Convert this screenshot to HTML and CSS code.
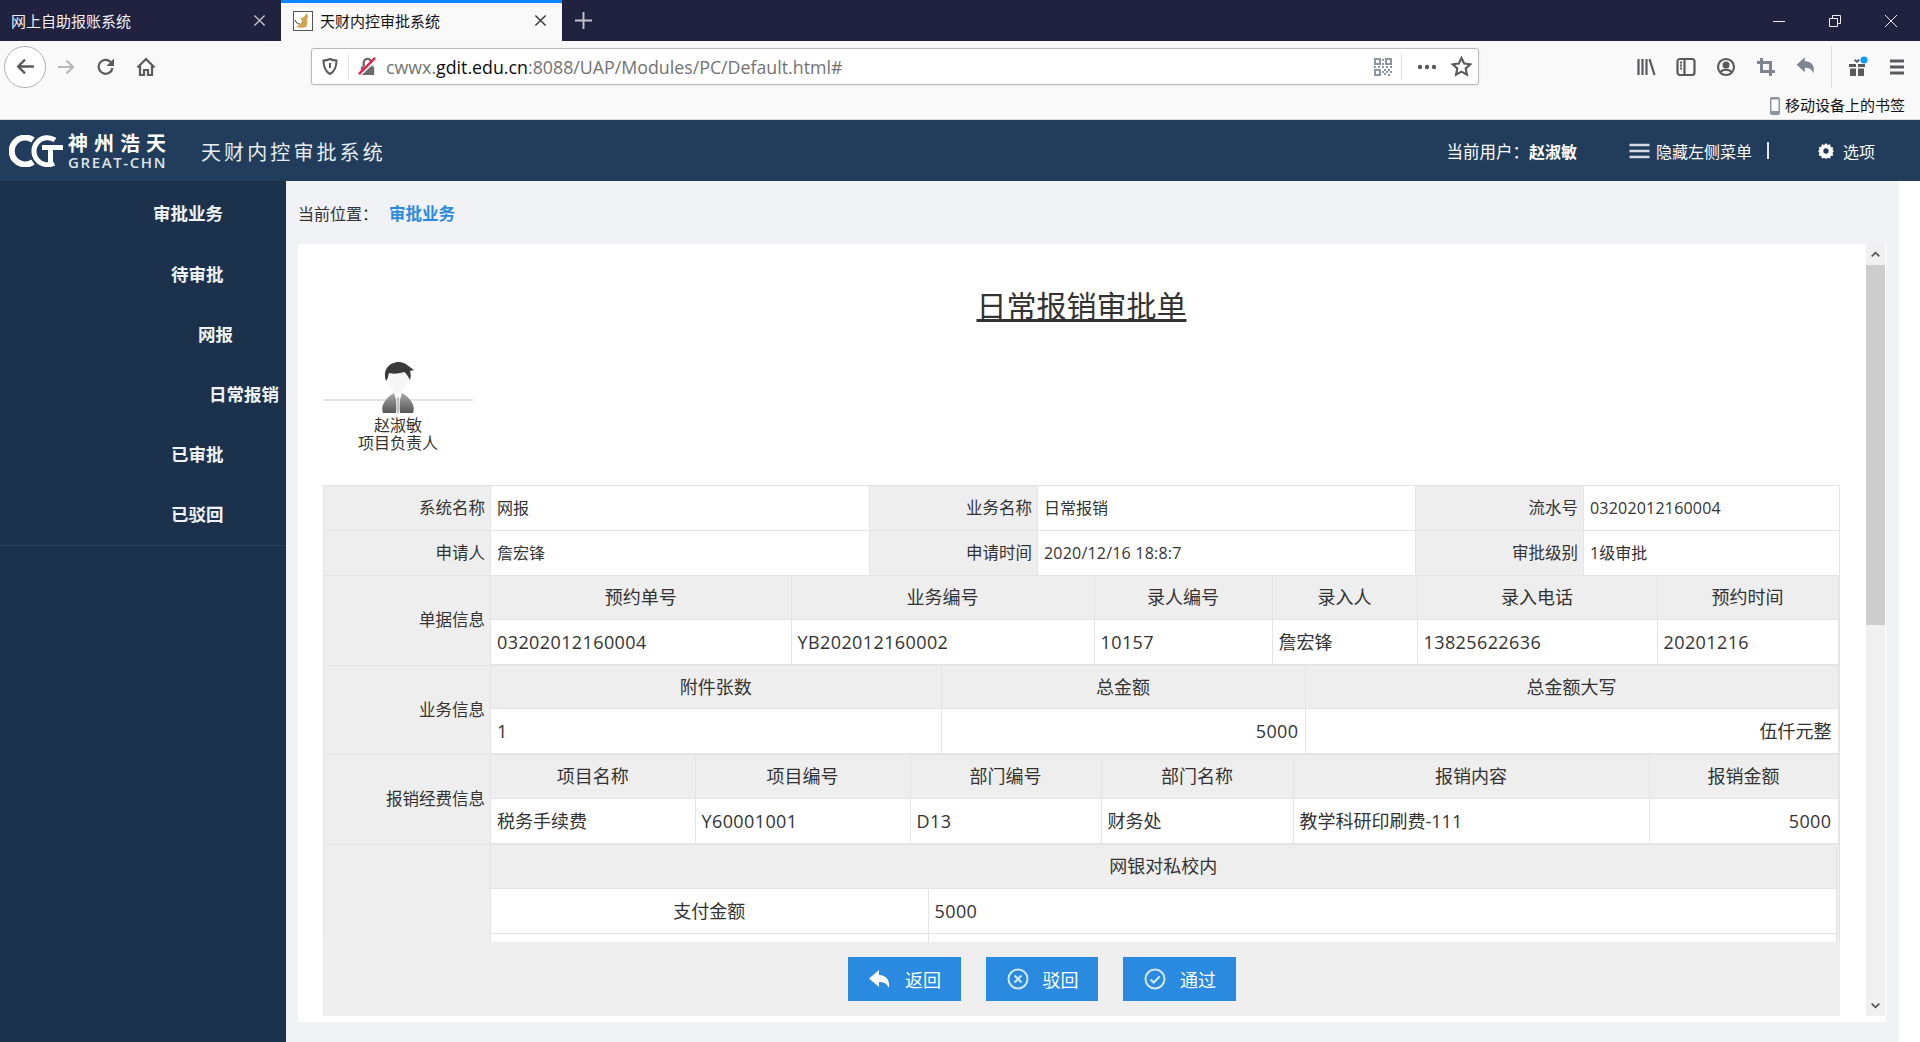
FILE: index.html
```html
<!DOCTYPE html>
<html lang="zh-CN">
<head>
  <meta charset="UTF-8" />
  <title>天财内控审批系统</title>
  <link rel="stylesheet" href="styles.css">
</head>
<body>
  <!-- Browser tabs -->
  <div class="tabbar">
    <div class="tab">
      <span class="tab-title">网上自助报账系统</span>
      <svg class="tab-close" viewBox="0 0 14 14"><path d="M1.5 1.5l11 11M12.5 1.5l-11 11"/></svg>
    </div>
    <div class="tab tab-active">
      <svg class="favicon" viewBox="0 0 20 20">
        <rect x="0.5" y="0.5" width="19" height="19" fill="#fff" stroke="#555"/>
        <path d="M3 16c3-1 5-3 6-6l-2-4 2 1 3-2 1-3 2 3-1 4c1 3 0 5-1 7-3 1-7 1-10 0z" fill="#d3a24f"/>
        <path d="M2 9c1 3 3 4 5 4" fill="none" stroke="#333"/>
      </svg>
      <span class="tab-title">天财内控审批系统</span>
      <svg class="tab-close" viewBox="0 0 14 14"><path d="M1.5 1.5l11 11M12.5 1.5l-11 11"/></svg>
    </div>
    <svg class="tab-new" viewBox="0 0 18 18"><path d="M9 0v18M0 9h18"/></svg>
    <div class="window-btns">
      <svg viewBox="0 0 14 14"><path d="M1 7.5h12"/></svg>
      <svg viewBox="0 0 14 14"><path d="M1.5 4.5h8v8h-8zM4.5 4.5v-3h8v8h-3"/></svg>
      <svg viewBox="0 0 14 14"><path d="M1 1l12 12M13 1L1 13"/></svg>
    </div>
  </div>

  <!-- Browser toolbar -->
  <div class="toolbar">
    <div class="toolbar-row">
      <span class="tool tool-back">
        <svg viewBox="0 0 20 20"><path d="M18 10H3M9.5 3.5L3 10l6.5 6.5"/></svg>
      </span>
      <span class="tool tool-disabled">
        <svg viewBox="0 0 20 20"><path d="M2 10h15M10.5 3.5L17 10l-6.5 6.5"/></svg>
      </span>
      <span class="tool">
        <svg viewBox="0 0 20 20"><path d="M16.5 11a7 7 0 1 1-2-6.2L17 7"/><path class="solid" d="M18 1.5V9h-7.5z"/></svg>
      </span>
      <span class="tool">
        <svg viewBox="0 0 20 20"><path d="M1.5 10.500L10 2l8.500 8.500M4 9v9h4v-5h4v5h4V9"/></svg>
      </span>

      <div class="urlbar">
        <svg class="url-shield" viewBox="0 0 16 18"><path d="M8 1.500c2 1 4 1.500 6.500 1.500 0 6-1 10.500-6.500 13.500C2.500 13.500 1.500 9 1.500 3 4 3 6 2.500 8 1.500z"/><path d="M8 5.500v5"/></svg>
        <span class="url-sep"></span>
        <svg class="url-lock" viewBox="0 0 20 20"><path d="M3 10h14v9H3z" fill="#6b6b6b"/><path d="M6 10V6a4 4 0 0 1 8 0v4" fill="none" stroke="#6b6b6b" stroke-width="2.500"/><path d="M1 19L19 2" stroke="#fff" stroke-width="4"/><path d="M1 18L18 1" stroke="#ed1c45" stroke-width="2.500"/></svg>
        <span class="url-text">cwwx.<b>gdit.edu.cn</b>:8088/UAP/Modules/PC/Default.html#</span>
        <svg class="url-qr" viewBox="0 0 18 18">
          <path d="M0 0h7v7H0zM11 0h7v7h-7zM0 11h7v7H0z"/>
          <path class="qr-dots" d="M8 1h2v2H8zM8 5h2v2H8zM0 8h2v2H0zM4 8h2v2H4zM8 8h2v2H8zM12 8h2v2h-2zM16 8h2v2h-2zM10 11h2v2h-2zM14 11h2v2h-2zM12 13h2v2h-2zM16 13h2v2h-2zM10 15h2v2h-2zM14 16h2v2h-2zM8 13h2v2H8z"/>
          <path class="qr-holes" d="M2 2h3v3H2zM13 2h3v3h-3zM2 13h3v3H2z"/>
        </svg>
        <span class="url-sep url-sep-right"></span>
        <svg class="url-dots" viewBox="0 0 20 6"><circle cx="3" cy="3" r="2.200"/><circle cx="10" cy="3" r="2.200"/><circle cx="17" cy="3" r="2.200"/></svg>
        <svg class="url-star" viewBox="0 0 20 20"><path d="M10 1.800l2.500 5.400 5.900.7-4.400 4 1.200 5.900L10 14.900 4.800 17.800 6 11.900l-4.400-4 5.900-.7z"/></svg>
      </div>

      <div class="tools-right">
        <span class="tool">
          <svg viewBox="0 0 20 20"><path d="M2.500 2v16M6.500 2v16M10.500 2v16M13.500 2l5 16"/></svg>
        </span>
        <span class="tool">
          <svg viewBox="0 0 20 20"><rect x="1.500" y="2" width="17" height="16" rx="2.500"/><path d="M8.500 2v16M4 5.500h2M4 8.500h2M4 11.500h2"/></svg>
        </span>
        <span class="tool">
          <svg viewBox="0 0 20 20"><circle cx="10" cy="10" r="8"/><circle class="solid" cx="10" cy="8" r="3.500"/><path d="M4.500 15c2-3 9-3 11 0"/></svg>
        </span>
        <span class="tool tool-soft">
          <svg viewBox="0 0 20 20"><path class="thick" d="M5.500 1v13.500H19M1 5.500h13.500V19"/></svg>
        </span>
        <span class="tool tool-soft tool-undo">
          <svg viewBox="0 0 20 20"><path class="solid" d="M8.500 2L1.500 8.500l7 6.500v-4c3.500 0 6 .8 7.500 5 1.500-6-1-10.500-7.500-10.500z"/></svg>
        </span>
        <span class="tool-sep"></span>
        <span class="tool tool-gift">
          <svg viewBox="0 0 22 22">
            <path class="solid" d="M3 8h7v3H3zM12 8h7v3h-7zM4 12.500h6V20H4zM12 12.500h6V20h-6zM11 7L8 4.500 9.500 3 11 4.500 12.500 3 14 4.500z"/>
            <circle class="gift-dot" cx="18" cy="4" r="3.500"/>
          </svg>
        </span>
        <span class="tool">
          <svg viewBox="0 0 20 20"><path class="thick" d="M3 4h14M3 10h14M3 16h14"/></svg>
        </span>
      </div>
    </div>
    <div class="bookmarks">
      <svg class="phone-icon" viewBox="0 0 10 18"><rect x="0" y="0" width="10" height="18" rx="2" fill="#8a93a0"/><rect x="1.500" y="2.500" width="7" height="11.500" fill="#fff"/></svg>
      <span>移动设备上的书签</span>
    </div>
  </div>

  <!-- App header -->
  <header class="app-header">
    <div class="logo">
      <svg class="logo-mark" viewBox="0 0 54 32">
        <path d="M24 5A13.500 13.500 0 1 0 24 27" fill="none" stroke="#fff" stroke-width="6"/>
        <path d="M46 5A13.500 13.500 0 1 0 45 28" fill="none" stroke="#fff" stroke-width="5"/>
        <path d="M33 10h21v5H44v16h-5V15h-6z" fill="#fff"/>
      </svg>
      <div class="logo-text">
        <span class="logo-cn">神州浩天</span>
        <span class="logo-en">GREAT-CHN</span>
      </div>
    </div>
    <div class="app-title">天财内控审批系统</div>
    <div class="header-right">
      <span class="user-label">当前用户：</span>
      <b class="user-name">赵淑敏</b>
      <svg class="menu-icon" viewBox="0 0 20 16"><path d="M0 2h20M0 8h20M0 14h20"/></svg>
      <span class="hide-menu">隐藏左侧菜单</span>
      <span class="header-sep"></span>
      <svg class="gear-icon" viewBox="0 0 16 16"><path d="M8 0l1.700 2.100 2.500-.8.500 2.600 2.600.6-.8 2.500L16 8l-1.500 1.900.8 2.500-2.600.6-.5 2.600-2.500-.8L8 16l-1.700-1.200-2.500.8-.5-2.600-2.600-.6.8-2.500L0 8l1.500-1.100-.8-2.500 2.600-.6.500-2.500 2.500.8z"/><circle cx="8" cy="8" r="2.700"/></svg>
      <span class="options">选项</span>
    </div>
  </header>

  <div class="layout">
    <!-- Left menu -->
    <aside class="sidebar">
      <ul class="menu">
        <li class="menu-item level-0">审批业务</li>
        <li class="menu-item level-1">待审批</li>
        <li class="menu-item level-2">网报</li>
        <li class="menu-item level-3">日常报销</li>
        <li class="menu-item level-1">已审批</li>
        <li class="menu-item level-1">已驳回</li>
      </ul>
    </aside>

    <main class="main">
      <div class="crumb">
        <span class="crumb-label">当前位置：</span>
        <b class="crumb-link">审批业务</b>
      </div>

      <div class="panel">
        <div class="panel-body">
          <h1 class="form-title">日常报销审批单</h1>

          <div class="approver">
            <div class="avatar">
              <svg viewBox="0 0 60 60">
                <defs>
                  <linearGradient id="bodyGrad" x1="0" y1="0" x2="0" y2="1">
                    <stop offset="0" stop-color="#a8a8a8"/>
                    <stop offset="1" stop-color="#565656"/>
                  </linearGradient>
                </defs>
                <path d="M30 14c7 0 10 5 10 10s-5 14-10 14-10-8-10-14 3-10 10-10z" fill="#f6f6f6"/>
                <path d="M18 26C14 13 23 7 31 7c6 0 9 4 15 8l-4 1c1 3 1 6 0 9-2-4-4-7-6-8-6 2-12 2-15 1-1 3-1 6-3 8z" fill="#3a3a3a"/>
                <path d="M15 58c-3-8 3-15 11-20l2 7v13z" fill="url(#bodyGrad)"/>
                <path d="M45 58c3-8-3-15-11-20l-2 7v13z" fill="url(#bodyGrad)"/>
                <path d="M29 42h2l1 12-2 6-2-6z" fill="#c4c4c4"/>
              </svg>
            </div>
            <div class="approver-name">赵淑敏</div>
            <div class="approver-role">项目负责人</div>
          </div>

          <div class="form-scroll">
            <table class="form-table">
              <colgroup>
                <col class="c-label"><col class="c-val1"><col class="c-label2"><col class="c-val2"><col class="c-label2"><col class="c-val3">
              </colgroup>
              <tr>
                <th>系统名称</th><td>网报</td>
                <th>业务名称</th><td>日常报销</td>
                <th>流水号</th><td class="num">03202012160004</td>
              </tr>
              <tr>
                <th>申请人</th><td>詹宏锋</td>
                <th>申请时间</th><td class="num">2020/12/16 18:8:7</td>
                <th>审批级别</th><td>1级审批</td>
              </tr>
              <tr>
                <th>单据信息</th>
                <td colspan="5" class="holder">
                  <table class="nested nested-bill">
                    <colgroup><col class="b1"><col class="b2"><col class="b3"><col class="b4"><col class="b5"><col class="b6"></colgroup>
                    <tr class="head">
                      <td>预约单号</td><td>业务编号</td><td>录人编号</td><td>录入人</td><td>录入电话</td><td>预约时间</td>
                    </tr>
                    <tr>
                      <td class="num">03202012160004</td><td class="num">YB202012160002</td><td class="num">10157</td><td>詹宏锋</td><td class="num">13825622636</td><td class="num">20201216</td>
                    </tr>
                  </table>
                </td>
              </tr>
              <tr>
                <th>业务信息</th>
                <td colspan="5" class="holder">
                  <table class="nested nested-biz">
                    <colgroup><col class="z1"><col class="z2"><col class="z3"></colgroup>
                    <tr class="head">
                      <td>附件张数</td><td>总金额</td><td>总金额大写</td>
                    </tr>
                    <tr>
                      <td class="num">1</td><td class="num right">5000</td><td class="right">伍仟元整</td>
                    </tr>
                  </table>
                </td>
              </tr>
              <tr>
                <th>报销经费信息</th>
                <td colspan="5" class="holder">
                  <table class="nested nested-fee">
                    <colgroup><col class="f1"><col class="f2"><col class="f3"><col class="f4"><col class="f5"><col class="f6"></colgroup>
                    <tr class="head">
                      <td>项目名称</td><td>项目编号</td><td>部门编号</td><td>部门名称</td><td>报销内容</td><td>报销金额</td>
                    </tr>
                    <tr>
                      <td>税务手续费</td><td class="num">Y60001001</td><td class="num">D13</td><td>财务处</td><td>教学科研印刷费-111</td><td class="num right">5000</td>
                    </tr>
                  </table>
                </td>
              </tr>
              <tr>
                <th></th>
                <td colspan="5" class="holder">
                  <table class="nested nested-pay">
                    <colgroup><col class="p1"><col class="p2"></colgroup>
                    <tr class="head"><td colspan="2">网银对私校内</td></tr>
                    <tr><td class="center">支付金额</td><td class="num">5000</td></tr>
                    <tr><td></td><td></td></tr>
                  </table>
                </td>
              </tr>
            </table>
          </div>

          <div class="form-actions">
            <button class="btn">
              <svg viewBox="0 0 24 24"><path class="fill" d="M11 3L1 11.500 11 20v-5c5 0 8 2 10 6 1-8-3-13-10-13z"/></svg>
              <span>返回</span>
            </button>
            <button class="btn btn-narrow">
              <svg viewBox="0 0 24 24"><circle cx="12" cy="12" r="9.500"/><path d="M8.500 8.500l7 7M15.500 8.500l-7 7"/></svg>
              <span>驳回</span>
            </button>
            <button class="btn">
              <svg viewBox="0 0 24 24"><circle cx="12" cy="12" r="9.500"/><path d="M7.500 12.500l3.200 3 6-6"/></svg>
              <span>通过</span>
            </button>
          </div>
        </div>

        <!-- Scrollbar of the form -->
        <div class="scrollbar">
          <svg class="scroll-arrow" viewBox="0 0 20 21"><path d="M6 12.500l4-4 4 4"/></svg>
          <div class="scroll-thumb"></div>
          <svg class="scroll-arrow scroll-arrow-down" viewBox="0 0 20 21"><path d="M6 8.500l4 4 4-4"/></svg>
        </div>
      </div>
    </main>
    <div class="right-strip"></div>
  </div>
</body>
</html>
```

FILE: styles.css
```css
* { box-sizing: border-box; }
html, body {
  margin: 0;
  height: 1042px;
  overflow: hidden;
}
body {
  font-family: "Open Sans", "Noto Sans CJK SC", sans-serif;
  color: #333;
  background: #fff;
}

/* tabs */
.tabbar {
  display: flex;
  align-items: stretch;
  height: 41px;
  background: #20223f;
}
.tab {
  display: flex;
  align-items: center;
  width: 281px;
  padding: 0 15px 0 11px;
  font-size: 15px;
  color: #f0f0f5;
}
.tab-title { flex: 1; line-height: 20px; }
.tab-close {
  width: 13px;
  height: 13px;
  fill: none;
  stroke: #c4c4cc;
  stroke-width: 1.5;
}
.tab-active {
  background: #f9f9fa;
  border-top: 3px solid #0a84ff;
  color: #111;
  padding: 0 15px 3px 12px;
}
.tab-active .tab-close { stroke: #333; }
.favicon { width: 20px; height: 20px; margin-right: 7px; }
.tab-new {
  align-self: center;
  width: 17px;
  height: 17px;
  margin-left: 13px;
  fill: none;
  stroke: #c4c4cc;
  stroke-width: 2;
}
.window-btns {
  display: flex;
  align-items: center;
  margin-left: auto;
  padding-right: 1px;
}
.window-btns svg {
  width: 14px;
  height: 14px;
  margin: 0 21px;
  fill: none;
  stroke: #eee;
  stroke-width: 1;
}

/* browser toolbar */
.toolbar {
  height: 79px;
  background: #f9f9fa;
  border-bottom: 1px solid #ddd;
}
.toolbar-row {
  display: flex;
  align-items: center;
  height: 51px;
  padding-left: 4px;
}
.tool {
  display: flex;
  align-items: center;
  justify-content: center;
  width: 40px;
  height: 40px;
  flex: none;
}
.tool svg {
  width: 20px;
  height: 20px;
  fill: none;
  stroke: #5a5a5c;
  stroke-width: 2.2;
}
.tool svg .solid { fill: #5a5a5c; stroke: none; }
.tool svg .thick { stroke-width: 3; }
.tool-back {
  width: 42px;
  height: 42px;
  background: #fff;
  border: 1px solid #b1b1b3;
  border-radius: 50%;
}
.tool-back svg { width: 21px; height: 21px; }
.tool-disabled svg { stroke: #b8b8ba; }
.tool-soft svg { stroke: #7c8591; }
.tool-soft svg .solid { fill: #7c8591; }
.tool-undo svg { width: 23px; height: 23px; }
.tool-gift svg { width: 22px; height: 22px; }
.gift-dot { fill: #0a9dff; stroke: none; }
.tool-sep {
  width: 1px;
  height: 42px;
  margin: 0 5px;
  background: #dcdcde;
}
.urlbar {
  display: flex;
  align-items: center;
  width: 1168px;
  height: 37px;
  margin-left: 145px;
  background: #fff;
  border: 1px solid #b9b9bb;
  border-radius: 3px;
  box-shadow: 0 1px 3px rgba(0,0,0,0.08);
}
.url-shield {
  width: 16px;
  height: 19px;
  margin-left: 10px;
  fill: none;
  stroke: #5a5a5c;
  stroke-width: 2;
}
.url-sep {
  width: 1px;
  height: 26px;
  margin-left: 10px;
  background: #e2e2e4;
}
.url-lock { width: 19px; height: 19px; margin-left: 9px; }
.url-text {
  flex: 1;
  margin-left: 9px;
  font-size: 17.8px;
  line-height: 24px;
  color: #737373;
  white-space: nowrap;
}
.url-text b { font-weight: 400; color: #0c0c0d; }
.url-qr { width: 18px; height: 18px; fill: #8d97a3; }
.url-qr .qr-holes { fill: #fff; }
.url-sep-right { margin-left: 9px; }
.url-dots { width: 20px; height: 6px; margin-left: 15px; fill: #5a5a5c; }
.url-star {
  width: 21px;
  height: 21px;
  margin-left: 14px;
  margin-right: 6px;
  fill: none;
  stroke: #5a5a5c;
  stroke-width: 2;
}
.tools-right {
  display: flex;
  align-items: center;
  margin-left: 147px;
}
.bookmarks {
  display: flex;
  align-items: center;
  justify-content: flex-end;
  height: 25px;
  padding-right: 15px;
  font-size: 15px;
  color: #111;
}
.phone-icon { width: 10px; height: 18px; margin-right: 5px; margin-top: 2px; }

/* app header */
.app-header {
  display: flex;
  align-items: center;
  height: 61px;
  background: #213d5b;
  color: #fff;
}
.logo {
  display: flex;
  align-items: center;
  width: 201px;
  padding-left: 9px;
}
.logo-mark { width: 54px; height: 32px; }
.logo-text {
  display: flex;
  flex-direction: column;
  margin-left: 5px;
}
.logo-cn {
  font-size: 20px;
  line-height: 23px;
  font-weight: 700;
  letter-spacing: 6px;
}
.logo-en {
  font-size: 15px;
  line-height: 14px;
  font-weight: 600;
  letter-spacing: 1.6px;
  color: #dfe4ea;
}
.app-title {
  padding-top: 2px;
  font-size: 20px;
  letter-spacing: 3.1px;
  color: #e8ecf0;
}
.header-right {
  display: flex;
  align-items: center;
  margin-left: auto;
  padding-right: 45px;
  font-size: 16px;
}
.user-label { font-size: 16.500px; }
.menu-icon {
  width: 21px;
  height: 16px;
  margin-left: 52px;
  margin-right: 6px;
  fill: none;
  stroke: #d5dbe2;
  stroke-width: 2.500;
}
.header-sep {
  width: 2px;
  height: 17px;
  margin: 0 14px 0 15px;
  background: #dfe4ea;
}
.gear-icon {
  width: 16px;
  height: 16px;
  margin-left: 35px;
  margin-right: 9px;
  fill: #fff;
}
.gear-icon circle { fill: #213d5b; }

/* page body */
.layout {
  display: flex;
  height: 861px;
}
.sidebar {
  width: 286px;
  flex: none;
  background: #1c324c;
}
.menu {
  list-style: none;
  margin: 0;
  padding: 2px 0;
  border-bottom: 1px solid #2a4158;
}
.menu-item {
  height: 60px;
  line-height: 60px;
  font-size: 17.500px;
  font-weight: 700;
  color: #f0f3f6;
  white-space: nowrap;
}
.menu-item + .menu-item { padding-top: 1px; }
.level-0 { padding-left: 153px; }
.level-1 { padding-left: 171px; }
.level-2 { padding-left: 198px; }
.level-3 { padding-left: 209px; }

.main {
  flex: 1;
  padding: 0 13px 20px 12px;
  background: #f0f2f6;
}
.crumb {
  display: flex;
  align-items: center;
  height: 63px;
  font-size: 16px;
}
.crumb-link {
  margin-left: 11px;
  font-size: 16.500px;
  color: #2a8adf;
}
.panel {
  display: flex;
  height: 778px;
  background: #fff;
  padding-bottom: 6px;
}
.panel-body {
  width: 1568px;
  padding: 0 26px 0 25px;
}
.form-title {
  margin: 0;
  padding-top: 42px;
  font-size: 30px;
  line-height: 40px;
  font-weight: 400;
  text-align: center;
  text-decoration: underline;
  color: #333;
}

.approver {
  width: 150px;
  height: 159px;
  padding-top: 29px;
  font-size: 16px;
  line-height: 18px;
  text-align: center;
}
.avatar {
  position: relative;
  height: 61px;
}
.avatar::before {
  content: "";
  position: absolute;
  left: 0;
  right: 0;
  top: 44px;
  height: 2px;
  background: #e4e4e4;
}
.avatar svg {
  position: absolute;
  left: 45px;
  top: 0;
  width: 60px;
  height: 60px;
}

.form-scroll {
  height: 457px;
  overflow: hidden;
}
.form-table, .nested {
  border-collapse: collapse;
  table-layout: fixed;
}
.form-table { width: 1516px; }
.form-table th, .form-table td {
  height: 45px;
  border: 1px solid #e4e4e4;
  font-size: 16px;
  font-weight: 400;
  line-height: 20px;
}
.form-table th {
  padding: 0 5px 0 0;
  font-size: 16.500px;
  text-align: right;
  background: #eee;
}
.form-table td { padding: 0 6px; background: #fff; }
.form-table td.num { letter-spacing: 0.2px; }
.c-label { width: 167px; }
.c-val1 { width: 379px; }
.c-label2 { width: 168px; }
.c-val2 { width: 378px; }
.c-val3 { width: 256px; }

.form-table td.holder {
  padding: 0;
  background: #eee;
  vertical-align: top;
}
.nested { width: 1347px; }
.form-table .nested td {
  height: 45px;
  padding: 0 6px;
  font-size: 18px;
  border-color: #e4e4e4;
  border-top: 0;
  border-left: 0;
}
.form-table .nested td.num { letter-spacing: 0.4px; }
.form-table .nested .head td {
  height: 43px;
  text-align: center;
  background: #eee;
}
.form-table .nested td.right { text-align: right; }
.form-table .nested td.center { text-align: center; }
.nested-pay { width: 1345px; }
.form-table .nested-pay .head td { height: 44px; }

.b1 { width: 300px; }
.b2 { width: 303px; }
.b3 { width: 178px; }
.b4 { width: 145px; }
.b5 { width: 240px; }
.b6 { width: 181px; }
.z1 { width: 450px; }
.z2 { width: 364px; }
.z3 { width: 533px; }
.f1 { width: 204px; }
.f2 { width: 215px; }
.f3 { width: 191px; }
.f4 { width: 192px; }
.f5 { width: 356px; }
.f6 { width: 189px; }
.p1 { width: 437px; }
.p2 { width: 908px; }

.form-actions {
  display: flex;
  justify-content: center;
  gap: 25px;
  height: 74px;
  padding: 15px 79px 0 0;
  background: #eee;
}
.btn {
  display: flex;
  align-items: center;
  justify-content: center;
  width: 113px;
  height: 44px;
  padding: 0;
  border: none;
  background: #2a8adf;
  color: #fff;
  font-family: inherit;
  font-size: 18px;
  cursor: pointer;
}
.btn-narrow { width: 112px; }
.btn svg {
  width: 24px;
  height: 24px;
  margin-right: 13px;
  fill: none;
  stroke: #d5e8f8;
  stroke-width: 2;
}
.btn svg .fill { fill: #fff; stroke: none; }

.scrollbar {
  display: flex;
  flex-direction: column;
  width: 19px;
  background: #f0f0f0;
}
.scroll-arrow {
  width: 19px;
  height: 21px;
  flex: none;
  fill: none;
  stroke: #555;
  stroke-width: 1.800;
}
.scroll-arrow-down { margin-top: auto; }
.scroll-thumb {
  height: 360px;
  background: #cdcdcd;
}

.right-strip {
  width: 21px;
  flex: none;
  background: #fff;
}
```
